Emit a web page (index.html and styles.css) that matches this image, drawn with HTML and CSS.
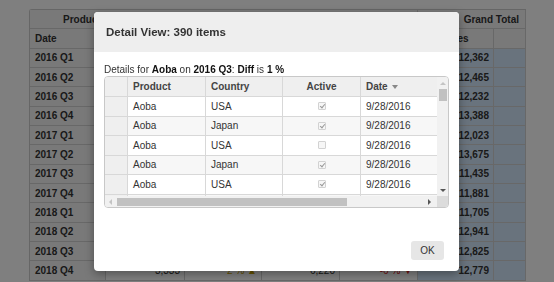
FILE: index.html
```html
<!DOCTYPE html>
<html lang="en">
<head>
    <meta charset="UTF-8">
    <title>Detail View</title>
    <link rel="stylesheet" href="styles.css">
</head>
<body>
    <div class="pivot">
        <div class="pv-cell pv-head pv-field">Product</div>
        <div class="pv-cell pv-head span4"></div>
        <div class="pv-cell pv-head pv-gt span2">Grand Total</div>

        <div class="pv-cell pv-head pv-left">Date</div>
        <div class="pv-cell pv-head">Sales</div>
        <div class="pv-cell pv-head">Diff</div>
        <div class="pv-cell pv-head">Sales</div>
        <div class="pv-cell pv-head">Diff</div>
        <div class="pv-cell pv-head">Sales</div>
        <div class="pv-cell pv-head"></div>
    </div>

    <div class="backdrop"></div>

    <div class="modal">
        <div class="modal-header">Detail View: 390 items</div>
        <div class="modal-body">
            <p class="details">Details for <b>Aoba</b> on <b>2016 Q3</b>: <b>Diff</b> is <b>1 %</b></p>
            <div class="fg">
                <div class="fg-cells">
                    <div class="fg-row fg-hdr">
                        <div class="fg-cell rh"></div>
                        <div class="fg-cell c-product">Product</div>
                        <div class="fg-cell c-country">Country</div>
                        <div class="fg-cell c-active center">Active</div>
                        <div class="fg-cell c-date">Date <span class="sort"></span></div>
                    </div>
                    <div class="fg-row">
                        <div class="fg-cell rh"></div>
                        <div class="fg-cell c-product">Aoba</div>
                        <div class="fg-cell c-country">USA</div>
                        <div class="fg-cell c-active center"><span class="chk on"></span></div>
                        <div class="fg-cell c-date">9/28/2016</div>
                    </div>
                    <div class="fg-row alt">
                        <div class="fg-cell rh"></div>
                        <div class="fg-cell c-product">Aoba</div>
                        <div class="fg-cell c-country">Japan</div>
                        <div class="fg-cell c-active center"><span class="chk on"></span></div>
                        <div class="fg-cell c-date">9/28/2016</div>
                    </div>
                    <div class="fg-row">
                        <div class="fg-cell rh"></div>
                        <div class="fg-cell c-product">Aoba</div>
                        <div class="fg-cell c-country">USA</div>
                        <div class="fg-cell c-active center"><span class="chk"></span></div>
                        <div class="fg-cell c-date">9/28/2016</div>
                    </div>
                    <div class="fg-row alt">
                        <div class="fg-cell rh"></div>
                        <div class="fg-cell c-product">Aoba</div>
                        <div class="fg-cell c-country">Japan</div>
                        <div class="fg-cell c-active center"><span class="chk on"></span></div>
                        <div class="fg-cell c-date">9/28/2016</div>
                    </div>
                    <div class="fg-row">
                        <div class="fg-cell rh"></div>
                        <div class="fg-cell c-product">Aoba</div>
                        <div class="fg-cell c-country">USA</div>
                        <div class="fg-cell c-active center"><span class="chk on"></span></div>
                        <div class="fg-cell c-date">9/28/2016</div>
                    </div>
                    <div class="fg-row alt">
                        <div class="fg-cell rh"></div>
                        <div class="fg-cell c-product">Aoba</div>
                        <div class="fg-cell c-country">Japan</div>
                        <div class="fg-cell c-active center"><span class="chk on"></span></div>
                        <div class="fg-cell c-date">9/28/2016</div>
                    </div>
                </div>
                <div class="vscroll">
                    <span class="arr up"></span>
                    <span class="vthumb"></span>
                    <span class="arr down"></span>
                </div>
                <div class="hscroll">
                    <span class="arr left"></span>
                    <span class="hthumb"></span>
                    <span class="arr right"></span>
                </div>
                <div class="corner"></div>
            </div>
        </div>
        <div class="modal-footer">
            <button class="btn">OK</button>
        </div>
    </div>

    <script>
        // fill the pivot rows behind the dialog
        var rows = [
            ["2016 Q1", "12,362"], ["2016 Q2", "12,465"], ["2016 Q3", "12,232"],
            ["2016 Q4", "13,388"], ["2017 Q1", "12,023"], ["2017 Q2", "13,675"],
            ["2017 Q3", "11,435"], ["2017 Q4", "11,881"], ["2018 Q1", "11,705"],
            ["2018 Q2", "12,941"], ["2018 Q3", "12,825"], ["2018 Q4", "12,779"]
        ];
        var pivot = document.querySelector(".pivot");
        rows.forEach(function (r) {
            var html = '<div class="pv-cell pv-date">' + r[0] + '</div>' +
                '<div class="pv-cell num">3,333</div>' +
                '<div class="pv-cell num up">2 % &#9650;</div>' +
                '<div class="pv-cell num">6,220</div>' +
                '<div class="pv-cell num down">-6 % &#9660;</div>' +
                '<div class="pv-cell num total">' + r[1] + '</div>' +
                '<div class="pv-cell total"></div>';
            pivot.insertAdjacentHTML("beforeend", html);
        });
    </script>
</body>
</html>
```

FILE: styles.css
```css
* {
    margin: 0;
    padding: 0;
    box-sizing: border-box;
}

body {
    font-family: "Liberation Sans", Arial, sans-serif;
    font-size: 10px;
    color: #333;
    background-color: #fff;
    overflow: hidden;
}

/* pivot grid behind the dialog */
.pivot {
    display: grid;
    grid-template-columns: 76px 79px 77px 78px 78px 76px 32px;
    grid-auto-rows: 19.35px;
    width: max-content;
    margin: 9px 0 0 29px;
    border-top: 1px solid #ccc;
    border-left: 1px solid #ccc;
    border-top-left-radius: 3px;
}

.pv-cell {
    display: flex;
    align-items: center;
    justify-content: center;
    padding: 0 4px;
    border-right: 1px solid #d0d0d0;
    border-bottom: 1px solid #d0d0d0;
    background-color: #fff;
    white-space: nowrap;
    overflow: hidden;
    color: #333;
}

.pv-head {
    background-color: #f2f2f2;
    font-weight: bold;
}

.pv-field {
    justify-content: flex-start;
    padding-left: 33px;
    border-right: none;
}

.span4 { grid-column: span 4; }
.span2 { grid-column: span 2; }

.pv-gt {
    justify-content: flex-end;
    padding-right: 6px;
}

.pv-left, .pv-date {
    justify-content: flex-start;
    padding-left: 5px;
}

.pv-date {
    background-color: #f2f2f2;
    font-weight: bold;
}

.num { justify-content: flex-end; }
.up { color: #c9a200; }
.down { color: #d22; }

.total {
    background-color: #d3e7fb;
    font-weight: bold;
}

.backdrop {
    position: fixed;
    inset: 0;
    background-color: rgba(0, 0, 0, 0.5);
}

/* dialog */
.modal {
    position: absolute;
    left: 94px;
    top: 12px;
    width: 365px;
    height: 259px;
    background-color: #fff;
    border-radius: 4px;
    box-shadow: 0 3px 10px rgba(0, 0, 0, 0.35);
    display: flex;
    flex-direction: column;
    overflow: hidden;
}

.modal-header {
    height: 40px;
    display: flex;
    align-items: center;
    padding-left: 12px;
    background-color: #eee;
    font-size: 11.5px;
    font-weight: bold;
    color: #333;
}

.modal-body {
    padding: 12px 10px 0 10px;
}

.details {
    line-height: 12px;
    color: #333;
}

.details b { color: #111; }

.fg {
    display: grid;
    grid-template-columns: 1fr 11px;
    grid-template-rows: 1fr 11px;
    width: 345px;
    height: 132px;
    border: 1px solid #c8c8c8;
    border-radius: 4px;
    overflow: hidden;
}

.fg-cells {
    overflow: hidden;
}

.fg-row {
    display: flex;
    height: 19.5px;
    background-color: #fff;
}

.fg-row.alt { background-color: #f7f7f7; }

.fg-hdr {
    height: 20px;
    background-color: #efefef;
    font-weight: bold;
    color: #444;
}

.fg-cell {
    flex: none;
    display: flex;
    align-items: center;
    padding: 0 5px;
    border-right: 1px solid #d8d8d8;
    border-bottom: 1px solid #d8d8d8;
    white-space: nowrap;
}

.fg-cell.center { justify-content: center; }

.rh {
    width: 23px;
    background-color: #efefef;
}

.c-product { width: 78px; }
.c-country { width: 77px; }
.c-active { width: 78px; }
.c-date { width: 90px; }

.sort {
    display: inline-block;
    margin-left: 4px;
    border-left: 3.5px solid transparent;
    border-right: 3.5px solid transparent;
    border-top: 4px solid #888;
}

.chk {
    display: inline-block;
    width: 8px;
    height: 8px;
    border: 1px solid #d2d2d2;
    border-radius: 1px;
    background-color: #f6f6f6;
    position: relative;
}

.chk.on::after {
    content: "";
    position: absolute;
    left: 2px;
    top: 0;
    width: 2px;
    height: 4px;
    border-right: 1px solid #999;
    border-bottom: 1px solid #999;
    transform: rotate(40deg);
}

/* scrollbars */
.vscroll, .hscroll {
    background-color: #f1f1f1;
    display: flex;
    align-items: center;
}

.vscroll {
    flex-direction: column;
    padding: 5px 0 4px;
}

.hscroll {
    padding: 0 4px 0 4px;
}

.vthumb {
    width: 8px;
    height: 12px;
    margin-top: 4px;
    background-color: #c1c1c1;
}

.vscroll .down { margin-top: auto; }

.hthumb {
    height: 8px;
    width: 230px;
    margin-left: 5px;
    background-color: #c1c1c1;
}

.hscroll .right { margin-left: auto; margin-right: 2px; }

.arr {
    display: inline-block;
    width: 0;
    height: 0;
}

.arr.up {
    border-left: 3px solid transparent;
    border-right: 3px solid transparent;
    border-bottom: 3px solid #c4c4c4;
}

.arr.down {
    border-left: 3px solid transparent;
    border-right: 3px solid transparent;
    border-top: 3px solid #555;
}

.arr.left {
    border-top: 3px solid transparent;
    border-bottom: 3px solid transparent;
    border-right: 3px solid #c4c4c4;
}

.arr.right {
    border-top: 3px solid transparent;
    border-bottom: 3px solid transparent;
    border-left: 3px solid #555;
}

.corner {
    background-color: #dcdcdc;
}

.modal-footer {
    margin-top: auto;
    display: flex;
    justify-content: flex-end;
    padding: 0 15px 11px 0;
}

.btn {
    width: 33px;
    height: 19px;
    border: none;
    border-radius: 3px;
    background-color: #e6e6e6;
    font-family: "Liberation Sans", Arial, sans-serif;
    font-size: 10px;
    color: #333;
}
```
